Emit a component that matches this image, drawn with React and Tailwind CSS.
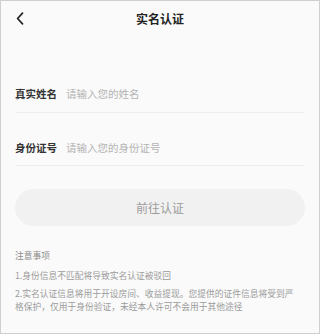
import React from "react";

const font = { fontFamily: '"Noto Sans CJK SC", "Noto Sans", sans-serif' };

function Field({ label, placeholder, pt, pb }) {
  return (
    <div className={`flex items-center border-b border-[#eeeeee] ${pt} ${pb}`}>
      <span className="w-[51px] shrink-0 text-[10.5px] leading-[12px] font-bold text-[#333333]">{label}</span>
      <input
        className="flex-1 bg-transparent outline-none text-[10.5px] leading-[12px] text-[#333333] placeholder:text-[#b3b3b3]"
        placeholder={placeholder}
      />
    </div>
  );
}

export default function App() {
  return (
    <div className="w-[320px] h-[334px] bg-[#fafafa] border border-[#cfcfcf] overflow-hidden" style={font}>
      <div className="relative h-[35px] flex items-center justify-center">
        <button className="absolute left-[13px] top-[10px] w-[12px] h-[14px] flex items-center justify-center">
          <svg width="8" height="13" viewBox="0 0 8 13" fill="none">
            <path d="M6.5 1.2L1.6 6.5l4.9 5.3" stroke="#222222" strokeWidth="1.7" strokeLinecap="round" strokeLinejoin="round" />
          </svg>
        </button>
        <span className="text-[12px] leading-[14px] font-bold text-[#222222] mt-[1px]">实名认证</span>
      </div>

      <div className="px-[14px]">
        <Field label="真实姓名" placeholder="请输入您的姓名" pt="pt-[52px]" pb="pb-[12px]" />
        <Field label="身份证号" placeholder="请输入您的身份证号" pt="pt-[29px]" pb="pb-[11px]" />

        <button className="mt-[23px] w-full h-[37px] rounded-full bg-[#f1f1f1] text-[12px] text-[#9c9c9c]">
          前往认证
        </button>

        <div className="mt-[23px] text-[8.75px] leading-[13px] text-[#9a9a9a]">
          <p className="text-[#8a8a8a]">注意事项</p>
          <p className="mt-[7px]">1.身份信息不匹配将导致实名认证被驳回</p>
          <p className="mt-[5px] pr-[6px]">2.实名认证信息将用于开设房间、收益提现。您提供的证件信息将受到严格保护，仅用于身份验证，未经本人许可不会用于其他途径</p>
        </div>
      </div>
    </div>
  );
}
